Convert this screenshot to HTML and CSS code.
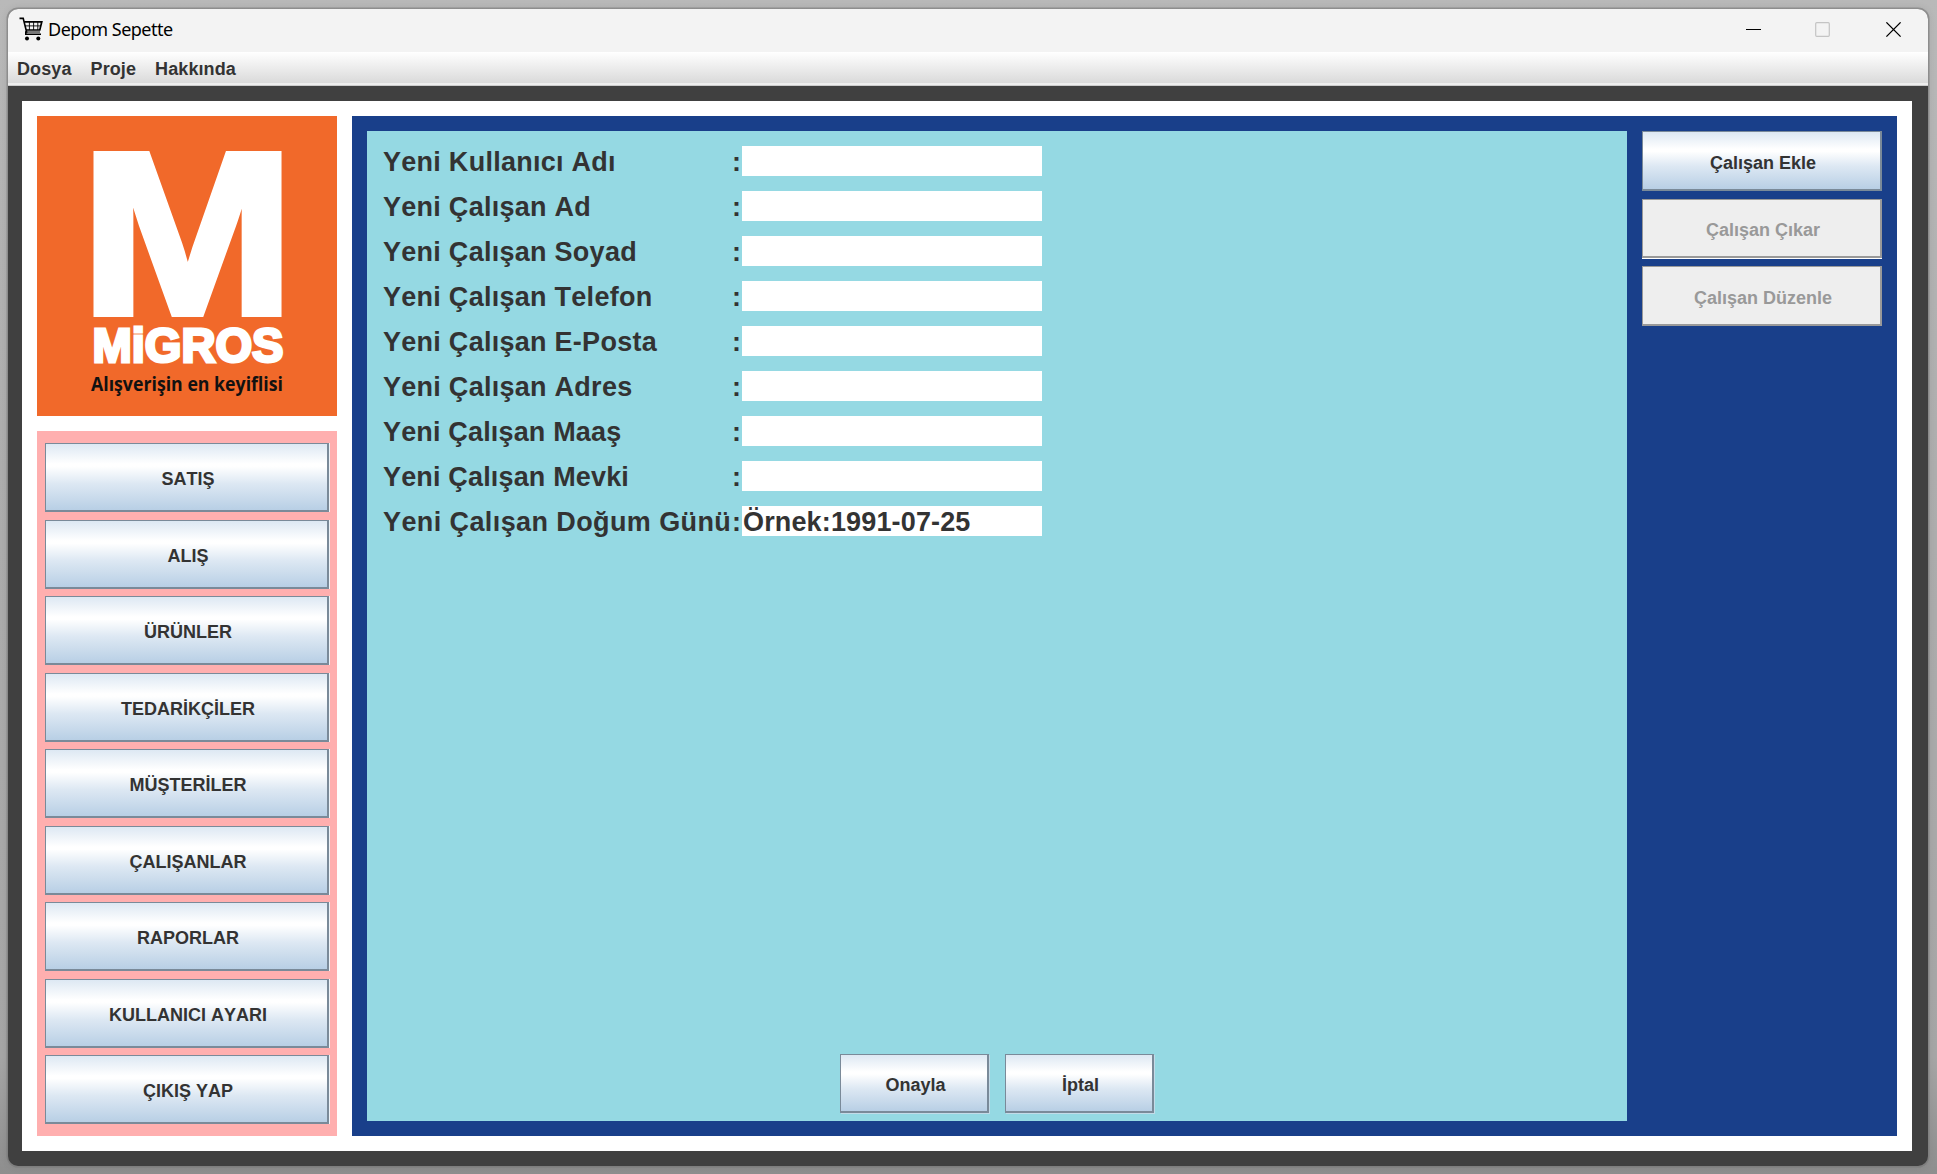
FILE: index.html
```html
<!DOCTYPE html>
<html lang="tr">
<head>
<meta charset="utf-8">
<title>Depom Sepette</title>
<link rel="stylesheet" href="styles.css">
</head>
<body>
<div class="window">
  <header class="titlebar">
    <svg class="cart" width="24" height="24" viewBox="0 0 24 24" fill="none" stroke="#000">
      <path d="M0.5 1.4H4.2L7.6 15H6.8V17.3H22" stroke-width="1.6"/>
      <path d="M5.2 4.8H22.8L20.8 13H7" stroke-width="1.7"/>
      <path d="M10.4 5V13M14.6 5V13M18.8 5V13M6 8.9H21.8" stroke-width=".9"/>
      <path d="M7.4 15H21" stroke-width="1"/>
      <circle cx="8" cy="21.4" r="2" fill="#000" stroke="none"/>
      <circle cx="19.3" cy="21.4" r="2" fill="#000" stroke="none"/>
    </svg>
    <span class="caption">Depom Sepette</span>
    <svg class="controls" width="156" height="16" viewBox="0 0 156 16" fill="none">
      <path d="M0 7.5H15" stroke="#000"/>
      <rect x="69.7" y="0.7" width="13.6" height="13.6" rx="1" stroke="#c4c4c4" stroke-width="1.2"/>
      <path d="M140.4 0.4L154.6 14.6M154.6 0.4L140.4 14.6" stroke="#000" stroke-width="1.3"/>
    </svg>
  </header>
  <nav class="menubar"><span>Dosya</span><span>Proje</span><span>Hakkında</span></nav>
  <main class="frame">
    <div class="page">
      <aside class="sidebar">
        <svg class="logo" width="300" height="300" viewBox="0 0 300 300">
          <rect width="300" height="300" fill="#f1692a"/>
          <text class="mark" transform="translate(42.5 198) scale(1.115 1)">M</text>
          <text class="brand" x="55.5" y="246.3" textLength="191" lengthAdjust="spacingAndGlyphs">MiGROS</text>
          <text class="slogan" x="54" y="275" textLength="192" lengthAdjust="spacingAndGlyphs">Alışverişin en keyiflisi</text>
        </svg>
        <div class="nav">
          <button class="btn">SATIŞ</button>
          <button class="btn">ALIŞ</button>
          <button class="btn">ÜRÜNLER</button>
          <button class="btn">TEDARİKÇİLER</button>
          <button class="btn">MÜŞTERİLER</button>
          <button class="btn">ÇALIŞANLAR</button>
          <button class="btn">RAPORLAR</button>
          <button class="btn">KULLANICI AYARI</button>
          <button class="btn">ÇIKIŞ YAP</button>
        </div>
      </aside>
      <section class="workspace">
        <form class="panel">
          <div class="fields">
            <label class="row"><span>Yeni Kullanıcı Adı</span><b>:</b><input type="text"></label>
            <label class="row"><span>Yeni Çalışan Ad</span><b>:</b><input type="text"></label>
            <label class="row"><span>Yeni Çalışan Soyad</span><b>:</b><input type="text"></label>
            <label class="row"><span>Yeni Çalışan Telefon</span><b>:</b><input type="text"></label>
            <label class="row"><span>Yeni Çalışan E-Posta</span><b>:</b><input type="text"></label>
            <label class="row"><span>Yeni Çalışan Adres</span><b>:</b><input type="text"></label>
            <label class="row tight"><span>Yeni Çalışan Maaş</span><b>:</b><input type="text"></label>
            <label class="row tight"><span>Yeni Çalışan Mevki</span><b>:</b><input type="text"></label>
            <label class="row wide"><span>Yeni Çalışan Doğum Günü</span><b>:</b><input type="text" value="Örnek:1991-07-25"></label>
          </div>
          <div class="confirm">
            <button class="btn" type="button">Onayla</button>
            <button class="btn" type="button">İptal</button>
          </div>
        </form>
        <div class="actions">
          <button class="btn">Çalışan Ekle</button>
          <button class="btn lit" disabled>Çalışan Çıkar</button>
          <button class="btn" disabled>Çalışan Düzenle</button>
        </div>
      </section>
    </div>
  </main>
</div>
</body>
</html>
```
FILE: styles.css
```css
* { box-sizing: border-box; }
body {
  margin: 0;
  width: 1937px;
  height: 1174px;
  padding: 9px 9px 8px 8px;
  overflow: hidden;
  background: linear-gradient(#b9b9b9, #aeaeae 40%, #a6a6a6 90%, #8e8e8e);
  font: bold 18px "Liberation Sans", Arial, sans-serif;
  font-kerning: none;
  color: #333;
}
.window {
  height: 1157px;
  display: flex;
  flex-direction: column;
  border-radius: 10px;
  overflow: hidden;
  background: #404040;
  box-shadow: 0 0 0 1.5px rgba(120, 120, 120, .6), 0 0 9px rgba(0, 0, 0, .12);
}
.titlebar {
  height: 43px;
  flex: none;
  display: flex;
  align-items: center;
  padding: 0 26px 0 11px;
  background: #f3f3f3;
}
.cart { margin-top: -3px; }
.caption {
  margin: -3px auto 0 5px;
  font: 18px "Noto Sans", sans-serif;
  letter-spacing: -.5px;
  color: #000;
}
.controls { margin-top: -1px; }
.menubar {
  height: 34px;
  flex: none;
  display: flex;
  gap: 19px;
  padding: 7px 0 0 9px;
  line-height: 20px;
  letter-spacing: .1px;
  background: linear-gradient(#fff, #dadada) 0 0 / 100% 31px no-repeat #eee;
  border-bottom: 1px solid #ccc;
}
.frame { flex: 1; padding: 15px 16px 15px 14px; }
.page { height: 1050px; display: flex; gap: 15px; padding: 15px; background: #fff; }
.sidebar { width: 300px; display: flex; flex-direction: column; gap: 15px; }
.logo { display: block; flex: none; overflow: visible; }
.mark {
  font: bold 232.6px "Liberation Sans", Arial, sans-serif;
  fill: #fff;
  stroke: #fff;
  stroke-width: 6px;
}
.brand {
  font: bold 48px "Liberation Sans", Arial, sans-serif;
  fill: #fff;
  stroke: #fff;
  stroke-width: 3px;
}
.slogan { font: bold 20px "Open Sans", sans-serif; fill: #111; }
.nav {
  height: 705px;
  display: grid;
  grid-template-rows: repeat(9, 69px);
  gap: 7.5px;
  padding: 12px 8px;
  background: #ffafaf;
}
.btn {
  margin: 0;
  padding: 5px 0 0 3px;
  border: solid #7a8a99;
  border-width: 1px 2px 2px 1px;
  border-radius: 0;
  background: linear-gradient(#dde8f3, #fff 30%, #fff 34%, #dde8f3 60%, #b8cfe5);
  font: inherit;
  color: inherit;
  box-shadow: 1px 0 #eef3f8;
}
.btn:disabled { background: #eee; border-color: #999; color: #999; }
.workspace { flex: 1; display: flex; gap: 15px; padding: 15px; background: #193f8a; }
.panel {
  width: 1260px;
  display: flex;
  flex-direction: column;
  justify-content: space-between;
  padding: 15px 15px 8px;
  background: #95d9e3;
}
.fields { display: grid; grid-auto-rows: 30px; gap: 15px; }
.row { display: flex; font-size: 27px; line-height: 32px; letter-spacing: .27px; }
.row.tight { letter-spacing: .16px; }
.row.wide { letter-spacing: .4px; }
.row span { width: 350px; padding-left: 1px; white-space: nowrap; }
.row b { width: 10px; }
.row input {
  width: 300px;
  height: 30px;
  border: 0;
  padding: 1px 1px 0;
  background: #fff;
  font: inherit;
  letter-spacing: .15px;
  color: inherit;
}
.confirm { display: flex; justify-content: center; gap: 16px; }
.confirm .btn { width: 149px; height: 59px; box-shadow: 1px 1px #c3dbe8; }
.actions { width: 240px; display: flex; flex-direction: column; gap: 7.5px; }
.actions .btn { height: 60px; padding-top: 6px; box-shadow: none; }
.actions .btn.lit { height: 59px; margin-bottom: 1px; box-shadow: 0 1px #fff; }
```
